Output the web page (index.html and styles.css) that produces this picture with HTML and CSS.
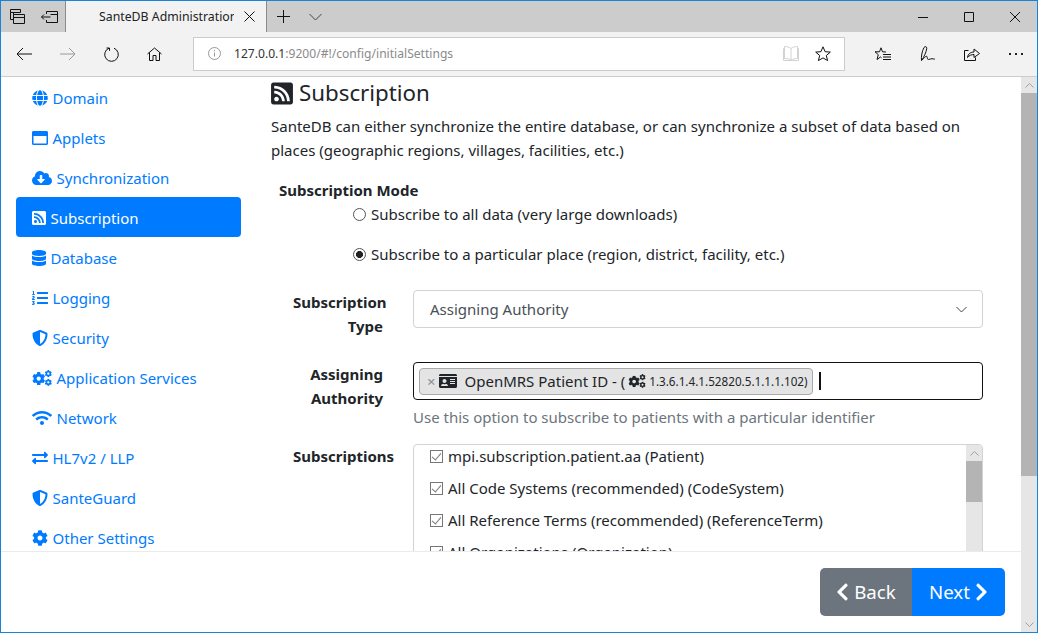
FILE: index.html
```html
<!DOCTYPE html>
<html>
<head>
<meta charset="utf-8">
<title>SanteDB Administration</title>
<link rel="stylesheet" href="styles.css">
</head>
<body>

<svg class="defs" xmlns="http://www.w3.org/2000/svg">
    <symbol id="i-globe" viewBox="0 0 496 512"><path d="M336.5 160C322 70.7 287.8 8 248 8s-74 62.7-88.5 152h177zM152 256c0 22.2 1.2 43.5 3.3 64h185.3c2.1-20.5 3.3-41.8 3.3-64s-1.2-43.5-3.3-64H155.3c-2.1 20.5-3.3 41.8-3.3 64zm324.7-96c-28.6-67.9-86.5-120.4-158-141.6 24.4 33.8 41.2 84.7 50 141.6h108zM177.2 18.4C105.8 39.6 47.8 92.1 19.3 160h108c8.7-56.9 25.5-107.8 49.9-141.6zM487.4 192H372.7c2.1 21 3.3 42.5 3.3 64s-1.2 43-3.3 64h114.6c5.5-20.5 8.6-41.8 8.6-64s-3.1-43.5-8.5-64zM120 256c0-21.5 1.2-43 3.3-64H8.6C3.2 212.5 0 233.8 0 256s3.2 43.5 8.6 64h114.6c-2-21-3.2-42.5-3.2-64zm39.5 96c14.5 89.3 48.7 152 88.5 152s74-62.7 88.5-152h-177zm159.3 141.6c71.4-21.2 129.4-73.7 158-141.6h-108c-8.8 56.9-25.6 107.8-50 141.6zM19.3 352c28.6 67.9 86.5 120.4 158 141.6-24.4-33.8-41.2-84.7-50-141.6h-108z"/></symbol>
    <symbol id="i-window" viewBox="0 0 512 512"><path d="M464 32H48C21.5 32 0 53.5 0 80v352c0 26.5 21.5 48 48 48h416c26.5 0 48-21.5 48-48V80c0-26.5-21.5-48-48-48zm0 394c0 3.3-2.7 6-6 6H54c-3.3 0-6-2.7-6-6V192h416v234z"/></symbol>
    <symbol id="i-cloud" viewBox="0 0 640 512"><path d="M537.6 226.6c4.1-10.7 6.4-22.4 6.4-34.6 0-53-43-96-96-96-19.7 0-38.1 6-53.3 16.2C367 64.2 315.3 32 256 32c-88.4 0-160 71.6-160 160 0 2.7.1 5.4.2 8.1C40.2 219.8 0 273.2 0 336c0 79.5 64.5 144 144 144h368c70.7 0 128-57.3 128-128 0-61.9-44-113.6-102.4-125.4zm-132.9 88.7L299.3 420.7c-6.2 6.2-16.4 6.2-22.6 0L171.3 315.3c-10.1-10.1-2.9-27.3 11.3-27.3H248V176c0-8.8 7.2-16 16-16h48c8.8 0 16 7.2 16 16v112h65.4c14.2 0 21.4 17.2 11.3 27.3z"/></symbol>
    <symbol id="i-rss" viewBox="0 0 448 512"><path d="M400 32H48C21.49 32 0 53.49 0 80v352c0 26.51 21.49 48 48 48h352c26.51 0 48-21.49 48-48V80c0-26.51-21.49-48-48-48zM112 416c-26.51 0-48-21.49-48-48s21.49-48 48-48 48 21.49 48 48-21.49 48-48 48zm157.533 0h-34.335c-6.011 0-11.051-4.636-11.442-10.634-5.214-80.05-69.243-143.92-149.123-149.123-5.997-.39-10.633-5.431-10.633-11.441v-34.335c0-6.535 5.468-11.777 11.994-11.425 110.546 5.974 198.997 94.536 204.964 204.964.352 6.526-4.89 11.994-11.425 11.994zm103.027 0h-34.334c-6.161 0-11.175-4.882-11.427-11.038-5.598-136.535-115.204-246.161-251.76-251.76C68.882 152.949 64 147.935 64 141.774V107.44c0-6.454 5.338-11.664 11.787-11.432 167.83 6.025 302.21 141.191 308.205 308.205.232 6.449-4.978 11.787-11.432 11.787z"/></symbol>
    <symbol id="i-database" viewBox="0 0 448 512"><path d="M448 73.143v45.714C448 159.143 347.667 192 224 192S0 159.143 0 118.857V73.143C0 32.857 100.333 0 224 0s224 32.857 224 73.143zM448 176v102.857C448 319.143 347.667 352 224 352S0 319.143 0 278.857V176c48.125 33.143 136.208 48.572 224 48.572S399.874 209.143 448 176zm0 160v102.857C448 479.143 347.667 512 224 512S0 479.143 0 438.857V336c48.125 33.143 136.208 48.572 224 48.572S399.874 369.143 448 336z"/></symbol>
    <symbol id="i-list" viewBox="0 0 512 512"><path d="M61.77 401l17.5-20.15a19.92 19.92 0 0 0 5.07-14.19v-3.31C84.34 356 80.5 352 73 352H16a8 8 0 0 0-8 8v16a8 8 0 0 0 8 8h22.83a157.41 157.41 0 0 0-11 12.31l-5.61 7c-4 5.07-5.25 10.13-2.8 14.88l1.05 1.93c3 5.76 6.29 7.88 12.25 7.88h4.73c10.33 0 15.94 2.44 15.94 9.09 0 4.72-4.2 8.22-14.36 8.22a41.54 41.54 0 0 1-15.47-3.12c-6.49-3.88-11.74-3.5-15.6 3.12l-5.59 9.31c-3.72 6.13-3.19 11.72 2.63 15.94 7.71 4.69 20.38 9.44 37 9.44 34.16 0 48.5-22.75 48.5-44.12-.03-14.38-9.12-29.76-28.73-34.88zM496 224H176a16 16 0 0 0-16 16v32a16 16 0 0 0 16 16h320a16 16 0 0 0 16-16v-32a16 16 0 0 0-16-16zm0-160H176a16 16 0 0 0-16 16v32a16 16 0 0 0 16 16h320a16 16 0 0 0 16-16V80a16 16 0 0 0-16-16zm0 320H176a16 16 0 0 0-16 16v32a16 16 0 0 0 16 16h320a16 16 0 0 0 16-16v-32a16 16 0 0 0-16-16zM16 160h64a8 8 0 0 0 8-8v-16a8 8 0 0 0-8-8H64V40a8 8 0 0 0-8-8H32a8 8 0 0 0-7.14 4.42l-8 16A8 8 0 0 0 24 64h8v64H16a8 8 0 0 0-8 8v16a8 8 0 0 0 8 8zm-3.91 160H80a8 8 0 0 0 8-8v-16a8 8 0 0 0-8-8H41.32c3.29-10.29 48.34-18.68 48.34-56.44 0-29.06-25-39.56-44.47-39.56-21.36 0-33.8 10-40.46 18.75-4.37 5.59-3 10.84 2.8 15.37l8.58 6.88c5.61 4.56 11 2.47 16.12-2.44a13.44 13.44 0 0 1 9.46-3.84c3.33 0 9.28 1.56 9.28 8.75C51 248.19 0 257.31 0 304.59v4C0 316 5.08 320 12.09 320z"/></symbol>
    <symbol id="i-shield" viewBox="0 0 512 512"><path d="M466.5 83.7l-192-80a48.15 48.15 0 0 0-36.9 0l-192 80C27.7 91.1 16 108.6 16 128c0 198.5 114.5 335.7 221.5 380.3 11.8 4.9 25.1 4.9 36.9 0C360.1 472.6 496 349.3 496 128c0-19.4-11.7-36.9-29.5-44.3zM256.1 446.3l-.1-381 175.9 73.3c-3.3 151.4-82.1 261.1-175.8 307.7z"/></symbol>
    <symbol id="i-cog" viewBox="0 0 512 512"><path d="M487.4 315.7l-42.6-24.6c4.3-23.2 4.3-47 0-70.2l42.6-24.6c4.9-2.8 7.1-8.6 5.5-14-11.1-35.6-30-67.8-54.7-94.6-3.8-4.1-10-5.1-14.8-2.3L380.8 110c-17.9-15.4-38.5-27.3-60.8-35.1V25.8c0-5.6-3.9-10.5-9.4-11.7-36.7-8.2-74.3-7.8-109.2 0-5.5 1.2-9.4 6.1-9.4 11.7V75c-22.2 7.9-42.8 19.8-60.8 35.1L88.7 85.5c-4.9-2.8-11-1.9-14.8 2.3-24.7 26.7-43.6 58.9-54.7 94.6-1.7 5.4.6 11.2 5.5 14L67.3 221c-4.3 23.2-4.3 47 0 70.2l-42.6 24.6c-4.9 2.8-7.1 8.6-5.5 14 11.1 35.6 30 67.8 54.7 94.6 3.8 4.1 10 5.1 14.8 2.3l42.6-24.6c17.9 15.4 38.5 27.3 60.8 35.1v49.2c0 5.6 3.9 10.5 9.4 11.7 36.7 8.2 74.3 7.8 109.2 0 5.5-1.2 9.4-6.1 9.4-11.7v-49.2c22.2-7.9 42.8-19.8 60.8-35.1l42.6 24.6c4.9 2.8 11 1.9 14.8-2.3 24.7-26.7 43.6-58.9 54.7-94.6 1.5-5.5-.7-11.3-5.6-14.1zM256 336c-44.1 0-80-35.9-80-80s35.9-80 80-80 80 35.9 80 80-35.9 80-80 80z"/></symbol>
    <symbol id="i-cogs" viewBox="0 0 640 512">
        <use href="#i-cog" x="0" y="60" width="430" height="430"/>
        <use href="#i-cog" x="405" y="0" width="235" height="235"/>
        <use href="#i-cog" x="405" y="277" width="235" height="235"/>
    </symbol>
    <symbol id="i-wifi" viewBox="0 0 640 512"><path d="M634.91 154.88C457.74-8.99 182.19-8.93 5.09 154.88c-6.66 6.16-6.79 16.59-.35 22.98l34.24 33.97c6.14 6.1 16.02 6.23 22.4.38 145.92-133.68 371.3-133.71 517.25 0 6.38 5.85 16.26 5.71 22.4-.38l34.24-33.97c6.43-6.39 6.3-16.82-.36-22.98zM320 352c-35.35 0-64 28.65-64 64s28.65 64 64 64 64-28.65 64-64-28.65-64-64-64zm202.67-83.59c-115.26-101.93-290.21-101.82-405.34 0-6.9 6.1-7.12 16.69-.57 23.15l34.44 33.99c6 5.92 15.66 6.32 22.05.8 83.95-72.57 209.74-72.41 293.49 0 6.39 5.52 16.05 5.13 22.05-.8l34.44-33.99c6.56-6.46 6.33-17.06-.56-23.15z"/></symbol>
    <symbol id="i-exchange" viewBox="0 0 512 512"><path d="M0 168v-16c0-13.255 10.745-24 24-24h360V80c0-21.367 25.899-32.042 40.971-16.971l80 80c9.372 9.373 9.372 24.569 0 33.941l-80 80C409.956 271.982 384 261.456 384 240v-48H24c-13.255 0-24-10.745-24-24zm488 152H128v-48c0-21.314-25.862-32.08-40.971-16.971l-80 80c-9.372 9.373-9.372 24.569 0 33.941l80 80C102.057 463.997 128 453.437 128 432v-48h360c13.255 0 24-10.745 24-24v-16c0-13.255-10.745-24-24-24z"/></symbol>
    <symbol id="i-idcard" viewBox="0 0 576 512"><path d="M528 32H48C21.5 32 0 53.5 0 80v16h576V80c0-26.5-21.5-48-48-48zM0 432c0 26.5 21.5 48 48 48h480c26.5 0 48-21.5 48-48V128H0v304zm352-232c0-4.4 3.6-8 8-8h144c4.4 0 8 3.6 8 8v16c0 4.4-3.6 8-8 8H360c-4.4 0-8-3.6-8-8v-16zm0 64c0-4.4 3.6-8 8-8h144c4.4 0 8 3.6 8 8v16c0 4.4-3.6 8-8 8H360c-4.4 0-8-3.6-8-8v-16zm0 64c0-4.4 3.6-8 8-8h144c4.4 0 8 3.6 8 8v16c0 4.4-3.6 8-8 8H360c-4.4 0-8-3.6-8-8v-16zM176 192c35.3 0 64 28.7 64 64s-28.7 64-64 64-64-28.7-64-64 28.7-64 64-64zM67.1 396.2C75.5 370.5 99.6 352 128 352h8.2c12.3 5.1 25.7 8 39.8 8s27.6-2.9 39.8-8h8.2c28.4 0 52.5 18.5 60.9 44.2 3.2 9.9-5.2 19.8-15.6 19.8H82.7c-10.4 0-18.8-10-15.6-19.8z"/></symbol>
    <symbol id="i-left" viewBox="0 0 320 512"><path d="M34.52 239.03L228.87 44.69c9.37-9.37 24.57-9.37 33.94 0l22.67 22.67c9.36 9.36 9.37 24.52.04 33.9L131.49 256l154.02 154.75c9.34 9.38 9.32 24.54-.04 33.9l-22.67 22.67c-9.37 9.37-24.57 9.37-33.94 0L34.52 272.97c-9.37-9.37-9.37-24.57 0-33.94z"/></symbol>
    <symbol id="i-right" viewBox="0 0 320 512"><path d="M285.476 272.971L91.132 467.314c-9.373 9.373-24.569 9.373-33.941 0l-22.667-22.667c-9.357-9.357-9.375-24.522-.04-33.901L188.505 256 34.484 101.255c-9.335-9.379-9.317-24.544.04-33.901l22.667-22.667c9.373-9.373 24.569-9.373 33.941 0L285.475 239.03c9.373 9.372 9.373 24.568.001 33.941z"/></symbol>
</svg>

<div class="window">

    <div class="tabbar">
        <div class="tab-tools">
            <svg class="line" width="15" height="15" viewBox="0 0 15 15"><path d="M.5 3.500v-3h10v3M.5 3.500h10M.5 3.500v7h3M3.500 5.500v-2M3.500 5.500h11v9h-11zM3.500 8.500h11"/></svg>
            <svg class="line" width="17" height="12" viewBox="0 0 17 12"><path d="M5.500 3V.5h11v11h-11V9M.5 6h9M3 3.500L.5 6 3 8.500M9.500 3.500h7"/></svg>
        </div>
        <div class="tab">
            <span class="tab-title">SanteDB Administration</span>
            <svg class="line" width="11" height="11" viewBox="0 0 11 11"><path d="M.5.5l10 10M10.500.5l-10 10"/></svg>
        </div>
        <svg class="line tab-new" width="13" height="13" viewBox="0 0 13 13"><path d="M6.500 0v13M0 6.500h13"/></svg>
        <svg class="line tab-list" width="13" height="8" viewBox="0 0 13 8"><path d="M.5 1l6 6 6-6"/></svg>
        <div class="win-controls">
            <svg class="line" width="10" height="10" viewBox="0 0 10 10"><path d="M0 5.500h10"/></svg>
            <svg class="line" width="10" height="10" viewBox="0 0 10 10"><path d="M.5.5h9v9h-9z"/></svg>
            <svg class="line" width="10" height="10" viewBox="0 0 10 10"><path d="M0 0l10 10M10 0L0 10"/></svg>
        </div>
    </div>

    <div class="toolbar">
        <div class="nav-buttons">
            <svg class="line" width="16" height="14" viewBox="0 0 16 14"><path d="M16 7H1M7 1L1 7l6 6"/></svg>
            <svg class="line faded" width="16" height="14" viewBox="0 0 16 14"><path d="M0 7h15M9 1l6 6-6 6"/></svg>
            <svg class="line" width="15" height="15" viewBox="0 0 15 15"><path d="M5 1.200A6.800 6.800 0 1 0 10 1.200M5.500 3.800V1H2.500"/></svg>
            <svg class="line" width="15" height="14" viewBox="0 0 15 14"><path d="M.5 7l7-6 7 6M2.500 5.500v8h3.500v-5h3v5h3.500v-8"/></svg>
        </div>
        <div class="address">
            <svg class="line faded" width="13" height="13" viewBox="0 0 13 13"><circle cx="6.500" cy="6.500" r="6"/><path d="M6.500 5.500v4M6.500 3v1.200"/></svg>
            <span class="url"><b>127.0.0.1</b>:9200/#!/config/initialSettings</span>
            <svg class="line pale" width="16" height="15" viewBox="0 0 16 15"><path d="M8 2.500C6.500 1 3.500.5 1.500.5v12c2 0 5 .5 6.500 1.500 1.500-1 4.500-1.500 6.500-1.500V.5c-2 0-5 .5-6.500 2zM8 2.500V14M1.500 2.500H.5v12h15v-12h-1"/></svg>
            <svg class="line" width="16" height="15" viewBox="0 0 16 15"><path d="M8 .8l2.100 4.900 5.200.4-4 3.400 1.300 5.100L8 11.900l-4.600 2.700 1.300-5.100-4-3.400 5.200-.4z"/></svg>
        </div>
        <div class="app-buttons">
            <svg class="line" width="16" height="15" viewBox="0 0 16 15"><path d="M6 .8L7.500 4.800l3.500.2M4.500 4.800H0l3.300 2.900L2 12.500l3.500-2.500 1 .7M6 .8L4.500 4.800M8 7.500h8M8 10h8M8 12.500h8"/></svg>
            <svg class="line" width="15" height="16" viewBox="0 0 15 16"><path d="M4 1.500c1-1.500 3-.8 2.800.8C6.300 6 4 11 1.500 14.500 1 11 2 5 4 1.500zM1.500 14.500c2-1.500 4-5 5.500-4 .5 1 0 3 1.500 3s2-1 3.500-.8 2 .5 3 .3"/></svg>
            <svg class="line" width="16" height="15" viewBox="0 0 16 15"><path d="M4.500 3.500H.5v10h11v-3M3.500 10.500C4 6.500 7 5 10 5V2l5.500 4.500L10 10.500V7.500c-2.500 0-5 1-6.500 3z"/></svg>
            <span class="more-dots"><i></i><i></i><i></i></span>
        </div>
    </div>

    <div class="viewport">
        <div class="page">
            <div class="page-body">

                <ul class="side-nav">
                    <li><a href="#"><svg class="ico"><use href="#i-globe"/></svg>Domain</a></li>
                    <li><a href="#"><svg class="ico"><use href="#i-window"/></svg>Applets</a></li>
                    <li><a href="#"><svg class="ico wide"><use href="#i-cloud"/></svg>Synchronization</a></li>
                    <li><a href="#" class="active"><svg class="ico narrow"><use href="#i-rss"/></svg>Subscription</a></li>
                    <li><a href="#"><svg class="ico narrow"><use href="#i-database"/></svg>Database</a></li>
                    <li><a href="#"><svg class="ico"><use href="#i-list"/></svg>Logging</a></li>
                    <li><a href="#"><svg class="ico"><use href="#i-shield"/></svg>Security</a></li>
                    <li><a href="#"><svg class="ico wide"><use href="#i-cogs"/></svg>Application Services</a></li>
                    <li><a href="#"><svg class="ico wide"><use href="#i-wifi"/></svg>Network</a></li>
                    <li><a href="#"><svg class="ico"><use href="#i-exchange"/></svg>HL7v2 / LLP</a></li>
                    <li><a href="#"><svg class="ico"><use href="#i-shield"/></svg>SanteGuard</a></li>
                    <li><a href="#"><svg class="ico"><use href="#i-cog"/></svg>Other Settings</a></li>
                </ul>

                <div class="content">
                    <h3 class="page-title"><svg class="title-ico"><use href="#i-rss"/></svg>Subscription</h3>
                    <p class="intro">SanteDB can either synchronize the entire database, or can synchronize a subset of data based on places (geographic regions, villages, facilities, etc.)</p>

                    <div class="mode">
                        <div class="mode-label">Subscription Mode</div>
                        <label class="radio"><span class="radio-dot"></span>Subscribe to all data (very large downloads)</label>
                        <label class="radio"><span class="radio-dot checked"></span>Subscribe to a particular place (region, district, facility, etc.)</label>
                    </div>

                    <div class="form-row">
                        <div class="form-label">Subscription Type</div>
                        <div class="form-field">
                            <div class="select">Assigning Authority
                                <svg class="line select-arrow" width="11" height="7" viewBox="0 0 11 7"><path d="M.5 1l5 5 5-5"/></svg>
                            </div>
                        </div>
                    </div>

                    <div class="form-row tight">
                        <div class="form-label">Assigning Authority</div>
                        <div class="form-field">
                            <div class="multi">
                                <span class="chip">
                                    <span class="chip-x">×</span>
                                    <svg class="chip-ico"><use href="#i-idcard"/></svg>
                                    <span>OpenMRS Patient ID - (</span>
                                    <small class="oid"><svg class="oid-ico"><use href="#i-cogs"/></svg>1.3.6.1.4.1.52820.5.1.1.1.102)</small>
                                </span>
                                <span class="caret"></span>
                            </div>
                            <div class="help">Use this option to subscribe to patients with a particular identifier</div>
                        </div>
                    </div>

                    <div class="form-row">
                        <div class="form-label">Subscriptions</div>
                        <div class="form-field">
                            <div class="checklist">
                                <div class="check-items">
                                    <label class="check"><span class="box"></span>mpi.subscription.patient.aa (Patient)</label>
                                    <label class="check"><span class="box"></span>All Code Systems (recommended) (CodeSystem)</label>
                                    <label class="check"><span class="box"></span>All Reference Terms (recommended) (ReferenceTerm)</label>
                                    <label class="check"><span class="box"></span>All Organizations (Organization)</label>
                                </div>
                                <div class="scrollbar small">
                                    <div class="sb-arrow"><svg width="9" height="5" viewBox="0 0 9 5"><path d="M.5 4.500l4-4 4 4"/></svg></div>
                                    <div class="sb-thumb"></div>
                                    <div class="sb-track"></div>
                                </div>
                            </div>
                        </div>
                    </div>
                </div>
            </div>

            <div class="page-footer">
                <div class="btn-group">
                    <a href="#" class="btn btn-back"><svg class="btn-ico"><use href="#i-left"/></svg>Back</a>
                    <a href="#" class="btn btn-next">Next<svg class="btn-ico"><use href="#i-right"/></svg></a>
                </div>
            </div>
        </div>

        <div class="scrollbar main">
            <div class="sb-arrow"><svg width="9" height="5" viewBox="0 0 9 5"><path d="M.5 4.500l4-4 4 4"/></svg></div>
            <div class="sb-thumb"></div>
            <div class="sb-track"></div>
            <div class="sb-arrow"><svg width="9" height="5" viewBox="0 0 9 5"><path d="M.5.5l4 4 4-4"/></svg></div>
        </div>
    </div>
</div>

</body>
</html>
```

FILE: styles.css
```css
html, body {
    margin: 0;
    padding: 0;
    height: 100%;
    overflow: hidden;
}

body {
    font-family: "Noto Sans", "Open Sans", sans-serif;
    font-size: 15px;
    line-height: 24px;
    color: #212529;
    background: white;
}

.defs {
    display: none;
}

.window {
    box-sizing: border-box;
    width: 1038px;
    height: 633px;
    border: 1px solid #1883d7;
    display: flex;
    flex-direction: column;
}

.line {
    fill: none;
    stroke: #111;
    stroke-width: 1;
    flex: none;
}

.line.faded {
    stroke: #999;
}

.line.pale {
    stroke: #d2d2d2;
}

/* tab strip */
.tabbar {
    height: 31px;
    background-color: #cccccc;
    display: flex;
    align-items: center;
    flex: none;
}

.tab-tools {
    width: 64px;
    padding-left: 9px;
    box-sizing: border-box;
    display: flex;
    gap: 16px;
    align-items: center;
}

.tab {
    box-sizing: border-box;
    width: 202px;
    height: 31px;
    background-color: #f2f2f2;
    border-left: 1px solid #8c8c8c;
    border-right: 1px solid #8c8c8c;
    padding-left: 33px;
    display: flex;
    align-items: center;
    font-size: 12.3px;
    color: #222;
}

.tab-title {
    width: 135px;
    margin-right: 10px;
    overflow: hidden;
    white-space: nowrap;
}

.tab-new {
    margin-left: 10px;
}

.tab-list {
    margin-left: 19px;
    stroke: #444;
}

.win-controls {
    margin-left: auto;
    display: flex;
    gap: 36px;
    padding-right: 17px;
}

/* address bar row */
.toolbar {
    box-sizing: border-box;
    height: 45px;
    background-color: #f2f2f2;
    border-bottom: 1px solid #ccc;
    display: flex;
    align-items: center;
    flex: none;
}

.nav-buttons {
    width: 192px;
    box-sizing: border-box;
    padding-left: 15px;
    display: flex;
    align-items: center;
    gap: 28px;
}

.address {
    box-sizing: border-box;
    width: 652px;
    height: 34px;
    margin-top: -1px;
    background: white;
    border: 1px solid #ccc;
    padding: 0 13px 0 14px;
    display: flex;
    align-items: center;
}

.url {
    margin-left: 13px;
    margin-right: auto;
    font-size: 12.1px;
    color: #8a8a8a;
}

.url b {
    font-weight: normal;
    color: #333;
}

.address .pale {
    margin-right: 16px;
}

.app-buttons {
    padding-left: 30px;
    display: flex;
    align-items: center;
    gap: 29px;
}

.more-dots {
    display: flex;
    gap: 4px;
}

.more-dots i {
    width: 2px;
    height: 2px;
    background: #222;
}

/* page */
.viewport {
    flex: 1;
    display: flex;
    min-height: 0;
}

.page {
    flex: 1;
    min-width: 0;
    display: flex;
    flex-direction: column;
}

.page-body {
    flex: 1;
    min-height: 0;
    overflow: hidden;
    display: flex;
    align-items: flex-start;
}

.page-footer {
    box-sizing: border-box;
    height: 81px;
    flex: none;
    border-top: 1px solid #e9ecef;
    padding: 16px 16px 0 0;
    display: flex;
    justify-content: flex-end;
    align-items: flex-start;
}

.side-nav {
    list-style: none;
    width: 225px;
    margin: 0 30px 0 15px;
    padding: 0;
    flex: none;
}

.side-nav a {
    height: 40px;
    box-sizing: border-box;
    padding: 2px 0 0 16px;
    border-radius: 4px;
    display: flex;
    align-items: center;
    gap: 4.5px;
    color: #007bff;
    text-decoration: none;
    white-space: nowrap;
}

.side-nav a.active {
    background-color: #007bff;
    color: white;
}

.ico {
    width: 16px;
    height: 16px;
    fill: currentColor;
    flex: none;
}

.ico.wide {
    width: 20px;
}

.ico.narrow {
    width: 14px;
}

.content {
    flex: 1;
    min-width: 0;
    padding-right: 38px;
}

.page-title {
    margin: 0 0 5px;
    font-size: 22.3px;
    font-weight: 400;
    line-height: 32px;
    display: flex;
    align-items: center;
    gap: 6px;
}

.title-ico {
    width: 22px;
    height: 25px;
    fill: #212529;
}

.intro {
    margin: 0 0 16px;
}

.mode {
    padding-left: 8px;
    margin-bottom: 16px;
}

.mode-label {
    font-weight: 700;
}

.radio {
    display: flex;
    align-items: center;
    height: 40px;
    padding-left: 74px;
}

.mode-label + .radio {
    margin-top: -8px;
}

.radio-dot {
    box-sizing: border-box;
    width: 13px;
    height: 13px;
    margin-right: 5px;
    border: 1px solid #555;
    border-radius: 50%;
    flex: none;
}

.radio-dot.checked {
    background: radial-gradient(circle, #222 0, #222 3.2px, white 3.8px);
}

.form-row {
    display: flex;
    margin-bottom: 24px;
}

.form-row.tight {
    margin-bottom: 15px;
}

.form-label {
    width: 90px;
    margin-left: 22px;
    margin-right: 30px;
    flex: none;
    font-weight: 700;
    text-align: right;
}

.form-field {
    flex: 1;
    min-width: 0;
}

.select {
    box-sizing: border-box;
    height: 38px;
    border: 1px solid #ced4da;
    border-radius: 4px;
    padding: 0 15px 0 16px;
    display: flex;
    align-items: center;
    justify-content: space-between;
    color: #495057;
}

.select-arrow {
    stroke: #444;
}

.multi {
    box-sizing: border-box;
    height: 38px;
    border: 1.5px solid #111;
    border-radius: 4px;
    padding: 0 5px;
    display: flex;
    align-items: center;
}

.chip {
    box-sizing: border-box;
    height: 27px;
    width: 394px;
    background: #e4e4e4;
    border: 1px solid #aaa;
    border-radius: 4px;
    padding-left: 7px;
    display: flex;
    align-items: center;
    white-space: nowrap;
}

.chip-x {
    color: #999;
    font-weight: 600;
    width: 11.5px;
}

.chip-ico {
    width: 18px;
    height: 16px;
    margin-right: 8px;
    fill: #212529;
    flex: none;
}

.oid {
    font-size: 11.7px;
    display: flex;
    align-items: center;
}

.oid-ico {
    width: 18px;
    height: 14px;
    margin-left: 3px;
    margin-right: 3px;
    fill: #212529;
}

.caret {
    width: 2px;
    height: 18px;
    margin-left: 6px;
    background: #111;
}

.help {
    color: #6c757d;
    margin-top: 5px;
}

.checklist {
    box-sizing: border-box;
    height: 200px;
    border: 1px solid #ced4da;
    border-radius: 4px;
    display: flex;
    overflow: hidden;
}

.check-items {
    flex: 1;
    margin-top: -5px;
    padding: 0 16px;
}

.check {
    display: flex;
    align-items: center;
    height: 32px;
    white-space: nowrap;
}

.box {
    box-sizing: border-box;
    width: 13px;
    height: 13px;
    margin-right: 5px;
    border: 1px solid #777;
    position: relative;
    flex: none;
}

.box::after {
    content: "";
    position: absolute;
    left: 3px;
    top: 0;
    width: 4px;
    height: 8px;
    border: solid #777;
    border-width: 0 1px 1px 0;
    transform: rotate(40deg);
}

/* scrollbars */
.scrollbar {
    width: 16px;
    flex: none;
    background: #e6e6e6;
    display: flex;
    flex-direction: column;
}

.scrollbar svg {
    fill: none;
    stroke: #a0a0a0;
}

.sb-arrow {
    height: 16px;
    flex: none;
    display: flex;
    align-items: center;
    justify-content: center;
}

.sb-thumb {
    background: #b4b4b4;
}

.sb-track {
    flex: 1;
}

.main .sb-thumb {
    height: 383px;
}

.small .sb-thumb {
    height: 41px;
}

/* wizard buttons */
.btn-group {
    display: flex;
}

.btn {
    box-sizing: border-box;
    height: 48px;
    display: flex;
    align-items: center;
    justify-content: center;
    gap: 5px;
    color: white;
    text-decoration: none;
    font-size: 18.7px;
}

.btn-back {
    width: 92px;
    background-color: #6c757d;
    border-radius: 5px 0 0 5px;
}

.btn-next {
    width: 93px;
    background-color: #007bff;
    border-radius: 0 5px 5px 0;
}

.btn-ico {
    width: 13px;
    height: 20px;
    fill: white;
}
```
